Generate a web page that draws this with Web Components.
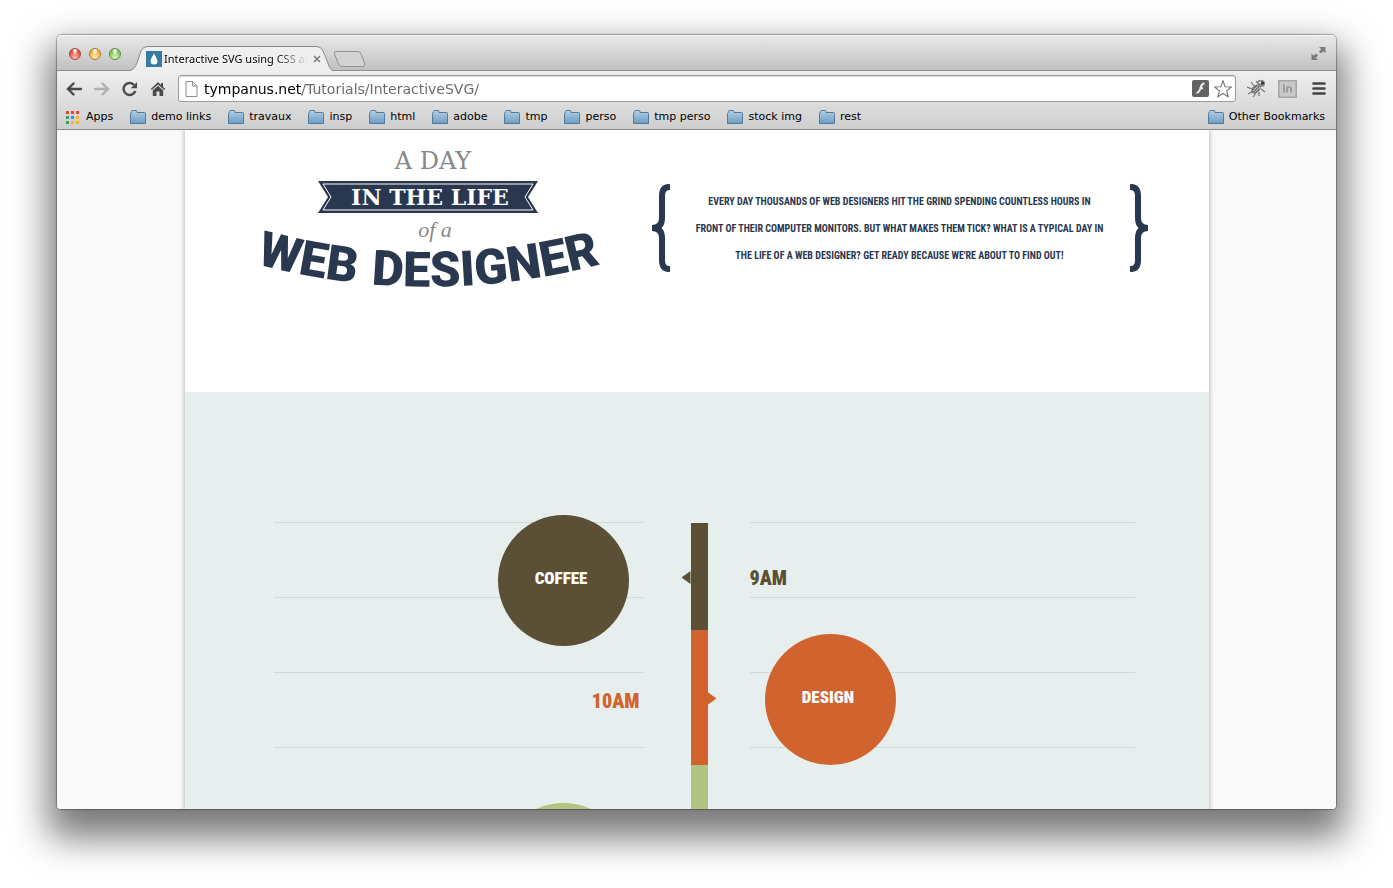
<!DOCTYPE html>
<html lang="en">
<head>
<meta charset="utf-8">
<title>Interactive SVG using CSS and SMIL</title>
<style>
html,body{margin:0;height:100%;background:#fff}
body{font-family:"DejaVu Sans",sans-serif;color:#000;overflow:hidden}
</style>
</head>
<body>
<browser-window>
  <tab-strip slot="chrome">Interactive SVG using CSS and SMIL</tab-strip>
  <nav-bar slot="chrome"></nav-bar>
  <bookmark-bar slot="chrome"></bookmark-bar>
  <designer-page></designer-page>
</browser-window>
<script>
const define = (name, html) => {
  const template = document.createElement('template');
  template.innerHTML = '<style>:host,*{box-sizing:border-box}</style>' + html;
  customElements.define(name, class extends HTMLElement {
    constructor() {
      super();
      this.attachShadow({mode: 'open'}).append(template.content.cloneNode(true));
    }
  });
};

define('browser-window', `
<style>
:host{display:block;height:100vh;padding:35px 57px 79px}
.win{height:100%;display:flex;flex-direction:column;border-radius:5px 5px 4px 4px;box-shadow:0 0 1px 1px rgba(0,0,0,.3),0 20px 36px 9px rgba(0,0,0,.53)}
.bars{flex:none;background:linear-gradient(#e9e9e9,#c1c1c1 35px,#8d8d8d 35px,#8d8d8d 36px,#efefef 36px,#cecece 94px);border-bottom:1px solid #8a8a8a;border-radius:5px 5px 0 0;box-shadow:inset 0 1px #f6f6f6}
main{flex:1;min-height:0;overflow:hidden;background:#f9f9f9;border-radius:0 0 4px 4px}
</style>
<div class="win"><div class="bars"><slot name="chrome"></slot></div><main><slot></slot></main></div>`);

define('tab-strip', `
<style>
:host{display:flex;height:36px;align-items:flex-end;padding-left:12px;font:11px "Noto Sans",sans-serif}
button{padding:0;border:0;background:none;display:block;flex:none}
.lights{display:flex;gap:8px;height:34px;align-items:center;margin-right:8px}
.lights button{width:12px;height:12px;border-radius:50%;border:1px solid #a04540;background:radial-gradient(ellipse at 50% 15%,#fff 0 8%,transparent 40%),radial-gradient(circle at 50% 90%,#ffc4bb,#ee524c 60%,#d03c38)}
.lights button:nth-child(2){border-color:#a6762e;background:radial-gradient(ellipse at 50% 15%,#fff 0 8%,transparent 40%),radial-gradient(circle at 50% 90%,#ffefa8,#f2b848 60%,#d69532)}
.lights button:nth-child(3){border-color:#5a8a3e;background:radial-gradient(ellipse at 50% 15%,#fff 0 8%,transparent 40%),radial-gradient(circle at 50% 90%,#dcffb8,#8fc866 60%,#62a346)}
.tab{position:relative;width:204px;height:25px;display:flex;align-items:center;padding:0 12px 0 17px;flex:none}
.tab>svg.bg{position:absolute;inset:0}
.tab>*{position:relative}
.title{flex:1;white-space:nowrap;overflow:hidden;margin-left:2px;-webkit-mask:linear-gradient(90deg,#000 112px,transparent 144px);text-shadow:0 1px #fff;line-height:16px}
.new{align-self:flex-start;margin-top:16px}
.full{margin:0 10px 10px auto}
svg{display:block}
</style>
<div class="lights"><button aria-label="Close"></button><button aria-label="Minimize"></button><button aria-label="Zoom"></button></div>
<div class="tab">
<svg class="bg" width="204" height="25" viewBox="0 0 204 25"><path d="M0 25C5 24 6 21 8 17L12 5Q14 .5 18 .5H188Q192 .5 194 5L199 17Q201 24 204 25Z" fill="#efefef"/><path d="M0 24.500C5 24 6 21 8 17L12 5Q14 .5 18 .5H188Q192 .5 194 5L199 17Q201 24 204 24.500" fill="none" stroke="#8b8b8b"/></svg>
<svg width="16" height="16" viewBox="0 0 16 16"><path fill="#357ba2" d="M0 0h16v16H0z"/><path fill="#fff" d="M8 2C7.500 5 4.500 7 4.500 10a3.500 3.500 0 0 0 7 0C11.500 7 8.500 5 8 2Z"/><path fill="#b4d2e2" d="M6.500 8q-1.500 3 1 4-3-.2-1-4"/></svg>
<span class="title"><slot></slot></span>
<button aria-label="Close tab"><svg width="8" height="8" viewBox="0 0 8 8"><path d="m1 1 6 6M7 1 1 7" stroke="#777" stroke-width="1.500"/></svg></button>
</div>
<button class="new" aria-label="New tab"><svg width="33" height="16" viewBox="0 0 33 16"><path d="M3 .5H25Q27 .5 28 3L31.500 12Q32.500 15.500 30 15.500H9Q6.500 15.500 5.500 13L1.500 3Q.5.5 3 .5Z" fill="#d3d3d3" stroke="#919191"/></svg></button>
<button class="full" aria-label="Full screen"><svg width="15" height="15" viewBox="0 0 15 15"><path fill="#7b7b7b" d="M8 1H14.500V7.500L12.300 5.300 10 7.600 7.900 5.500 10.200 3.200ZM.5 7.500 2.700 9.700 5 7.400 7.100 9.500 4.800 11.800 7 14H.5Z"/></svg></button>`);

define('nav-bar', `
<style>
:host{display:flex;height:35px;align-items:center;padding:0 10px 0 9px}
button{padding:0;border:0;background:none;display:block;flex:none;margin-right:12px}
svg{display:block}
.box{flex:1;min-width:0;display:flex;align-items:center;height:27px;background:#fff;border:1px solid #9c9c9c;border-radius:3px;padding:0 3px 0 6px;box-shadow:inset 0 1px 1px #ddd}
.box button{margin:0 0 0 5px}
input{flex:1;min-width:0;border:0;outline:0;padding:0;margin-left:6px;height:24px;font:14px "DejaVu Sans",sans-serif;background:linear-gradient(90deg,#000 98px,#686868 98px);-webkit-background-clip:text;background-clip:text;-webkit-text-fill-color:transparent}
.box+button,.ext{margin:0 0 0 11px}
.menu{margin:0 0 0 15px}
</style>
<button aria-label="Back"><svg width="16" height="14" viewBox="0 0 16 14"><path d="M7.500 1.500 2 7l5.500 5.500M2.500 7H15" fill="none" stroke="#4a4a4a" stroke-width="2.400" stroke-linecap="round"/></svg></button>
<button aria-label="Forward"><svg width="16" height="14" viewBox="0 0 16 14"><path d="M8.500 1.500 14 7l-5.500 5.500M13.500 7H1" fill="none" stroke="#b0b0b0" stroke-width="2.400" stroke-linecap="round"/></svg></button>
<button aria-label="Reload"><svg width="16" height="16" viewBox="0 0 16 16"><path d="M13.300 10A6 6 0 1 1 12 3.800" fill="none" stroke="#4a4a4a" stroke-width="2.400"/><path fill="#4a4a4a" d="M15 1v6.200H8.800z"/></svg></button>
<button aria-label="Home"><svg width="16" height="16" viewBox="0 0 16 16"><path fill="#4a4a4a" d="M8 1 .8 8l1 1.100L8 3.500l6.200 5.600 1-1.100L13 5.800V2h-2v2ZM2.800 9.500 8 4.800l5.200 4.700V15H9.500v-4.500h-3V15H2.800Z"/></svg></button>
<div class="box">
<svg width="13" height="16" viewBox="0 0 13 16"><path d="M1 .5h6.500L12 5v10.500H1ZM7.500.5V5H12" fill="#fdfdfd" stroke="#8e8e8e"/></svg>
<input type="text" aria-label="Address" value="tympanus.net/Tutorials/InteractiveSVG/">
<button aria-label="Flash"><svg width="17" height="17" viewBox="0 0 17 17"><rect width="17" height="17" rx="2" fill="#636363"/><path d="M12.500 3.500C9 3.500 9 7 8 9.500S6.500 13 4.500 13M7.500 8.300H11" fill="none" stroke="#eee" stroke-width="2"/></svg></button>
<button aria-label="Bookmark this page"><svg width="18" height="18" viewBox="0 0 18 18"><path d="m9 .8 2.200 6 6.100.2-4.700 3.900 1.600 5.900L9 13.500l-5.200 3.300 1.600-5.900L.7 7l6.100-.2Z" fill="#fff" stroke="#777" stroke-width="1.100"/></svg></button>
</div>
<button class="ext" aria-label="Firebug"><svg width="20" height="19" viewBox="0 0 20 19"><path d="M7 7 4 3M5 10 0 8M6 12l-5 3M9 14l-3 4M12 13v4M12 6 9 2M14 10l4 3M10 4l3-3" stroke="#777" stroke-width="1.200"/><ellipse cx="9" cy="10" rx="5.500" ry="3.600" transform="rotate(-42 9 10)" fill="#777"/><path d="m6 12 5-5M8 13l5-5" stroke="#c5c5c5"/><circle cx="14.500" cy="4.500" r="3.500" fill="#888"/><circle cx="15.500" cy="4" r="1.600" fill="#333"/><circle cx="13" cy="3.500" r="1" fill="#fff"/></svg></button>
<button class="ext" aria-label="LinkedIn"><svg width="19" height="18" viewBox="0 0 19 18"><path d="M.8.800h17.400v16.400H.8Z" fill="#c9c9c9" stroke="#a6a6a6" stroke-width="1.600"/><path d="M6 4.500v8M9 12.500V6.500M9 9q0-2 2-2t2 2v3.500" fill="none" stroke="#969696" stroke-width="1.700"/></svg></button>
<button class="menu" aria-label="Menu"><svg width="14" height="13" viewBox="0 0 14 13"><path d="M1.500 1.500h11M1.500 6.500h11M1.500 11.500h11" stroke="#444" stroke-width="2.600" stroke-linecap="round"/></svg></button>`);

define('folder-link', `
<style>
:host{display:block}
a{display:flex;align-items:center;gap:5px;color:#000;text-decoration:none;font-size:11px;line-height:16px;white-space:nowrap}
svg{display:block}
</style>
<a href="#"><svg width="16" height="15" viewBox="0 0 16 15"><defs><linearGradient id="g" x2="0" y2="1"><stop stop-color="#b4d0e4"/><stop offset="1" stop-color="#6a9cc3"/></linearGradient></defs><path d="M.5 13.500V3.500Q.5 2.500 1.500 2.500V1.500Q1.500.500 2.500.5H6Q7 .5 7 1.500V2.500H14.500Q15.500 2.500 15.500 3.500V13.500Z" fill="url(#g)" stroke="#54789a"/></svg><slot></slot></a>`);

define('bookmark-bar', `
<style>
:host{display:flex;height:23px;align-items:center;padding:0 11px 1px 9px;gap:17px}
.apps{display:flex;gap:7px;align-items:center;font-size:11px;line-height:16px;color:#000;text-decoration:none}
.other{margin-left:auto}
svg{display:block}
</style>
<a class="apps" href="#"><svg width="13" height="13" viewBox="0 0 13 13"><path fill="#e8453c" d="M0 0h3v3H0zM5 0h3v3H5zM10 0h3v3h-3z"/><path fill="#3aa757" d="M0 5h3v3H0zM0 10h3v3H0z"/><path fill="#4086f4" d="M5 5h3v3H5z"/><path fill="#f5b51f" d="M10 5h3v3h-3zM5 10h3v3H5zM10 10h3v3h-3z"/></svg>Apps</a>
<folder-link>demo links</folder-link><folder-link>travaux</folder-link><folder-link>insp</folder-link><folder-link>html</folder-link><folder-link>adobe</folder-link><folder-link>tmp</folder-link><folder-link>perso</folder-link><folder-link>tmp perso</folder-link><folder-link>stock img</folder-link><folder-link>rest</folder-link>
<folder-link class="other">Other Bookmarks</folder-link>`);

define('day-logo', `
<style>:host{display:block;flex:none}svg{display:block;overflow:visible}</style>
<svg width="340" height="142" viewBox="0 0 340 142" role="img" aria-label="A day in the life of a web designer">
<text x="171" y="19" text-anchor="middle" font-family="DejaVu Serif" font-size="24" fill="#888">A DAY</text>
<path d="M56 31H276L266 47 276 63H56L66 47Z" fill="#29374f"/>
<path d="M61 34H271L263 47 271 60H61L69 47Z" fill="none" stroke="#fff"/>
<text x="168" y="55" text-anchor="middle" font-family="DejaVu Serif" font-weight="700" font-size="22" fill="#fff">IN THE LIFE</text>
<text x="173" y="87" text-anchor="middle" font-family="Liberation Serif" font-style="italic" font-size="22" fill="#888">of a</text>
<path id="arc" d="M-6 114A667 667 0 0 0 339 114" fill="none"/>
<g font-family="Roboto" font-weight="900" font-size="49" fill="#29374f">
<text><textPath href="#arc">WEB</textPath></text>
<text><textPath href="#arc" startOffset="100%" text-anchor="end">DESIGNER</textPath></text>
</g>
</svg>`);

define('intro-quote', `
<style>
:host{display:flex;flex:none;width:496px;align-items:center;justify-content:space-between}
p{margin:0;text-align:center;font:700 10px/27px "Roboto Condensed","Liberation Sans Narrow",sans-serif;color:#29374f;text-transform:uppercase;white-space:nowrap}
svg{display:block}
</style>
<svg width="18" height="88" viewBox="0 0 18 88"><path d="M18 3H17Q10 3 10 12V34Q10 44 0 44Q10 44 10 54V76Q10 85 17 85H18" fill="none" stroke="#29374f" stroke-width="6"/></svg>
<p><slot></slot></p>
<svg width="18" height="88" viewBox="0 0 18 88"><path d="M0 3H1Q8 3 8 12V34Q8 44 18 44Q8 44 8 54V76Q8 85 1 85H0" fill="none" stroke="#29374f" stroke-width="6"/></svg>`);

define('day-timeline', `
<style>
:host{display:flex;height:700px;padding:130px 74px 0 89px;font-family:"Roboto Condensed","Liberation Sans Narrow",sans-serif;font-weight:900}
.side{display:flex;flex-direction:column;background:repeating-linear-gradient(#ccdbdc 0 1px,transparent 1px 75px)}
.left{flex:370;align-items:flex-end}
.right{flex:385;align-items:flex-start}
button{flex:none;width:131px;height:131px;border:0;border-radius:50%;margin:0 15px;padding:0 4px 6px 0;font:inherit;font-size:17px;line-height:24px;color:#fff;background:#5b4f35}
.left button:first-child{margin-top:-7px}
.design{background:#d1642e}
.green{background:#b1c582}
time{font-size:20px;line-height:28px;color:#5b4f35}
.left time{color:#d1642e;margin:41px 4px 88px}
.right time{margin:42px 0}
.bar{flex:none;width:17px;margin:1px 42px 0 47px;display:flex;flex-direction:column;background:#b1c582}
.seg{position:relative;height:107px;background:#5b4f35}
.seg+.seg{height:135px;background:#d1642e}
.seg::after{content:"";position:absolute;top:48px;right:100%;width:9px;height:13px;background:inherit;clip-path:polygon(0 50%,100% 0,100% 100%)}
.seg+.seg::after{top:62px;left:100%;clip-path:polygon(0 0,100% 50%,0 100%)}
</style>
<div class="side left"><button>COFFEE</button><time datetime="10:00">10AM</time><button class="green" aria-label="Next activity"></button></div>
<div class="bar"><div class="seg"></div><div class="seg"></div></div>
<div class="side right"><time datetime="09:00">9AM</time><button class="design">DESIGN</button></div>`);

define('designer-page', `
<style>
:host{display:block;max-width:1024px;margin:0 auto;background:#fff;box-shadow:0 0 5px rgba(0,0,0,.35)}
header{display:flex;align-items:flex-start;height:262px;padding:20px 61px 0 77px;justify-content:space-between}
intro-quote{margin-top:34px}
day-timeline{background:#e6efed}
</style>
<header><day-logo></day-logo><intro-quote>Every day thousands of web designers hit the grind spending countless hours in<br>front of their computer monitors. But what makes them tick? What is a typical day in<br>the life of a web designer? Get ready because we're about to find out!</intro-quote></header>
<day-timeline></day-timeline>`);
</script>
</body>
</html>
